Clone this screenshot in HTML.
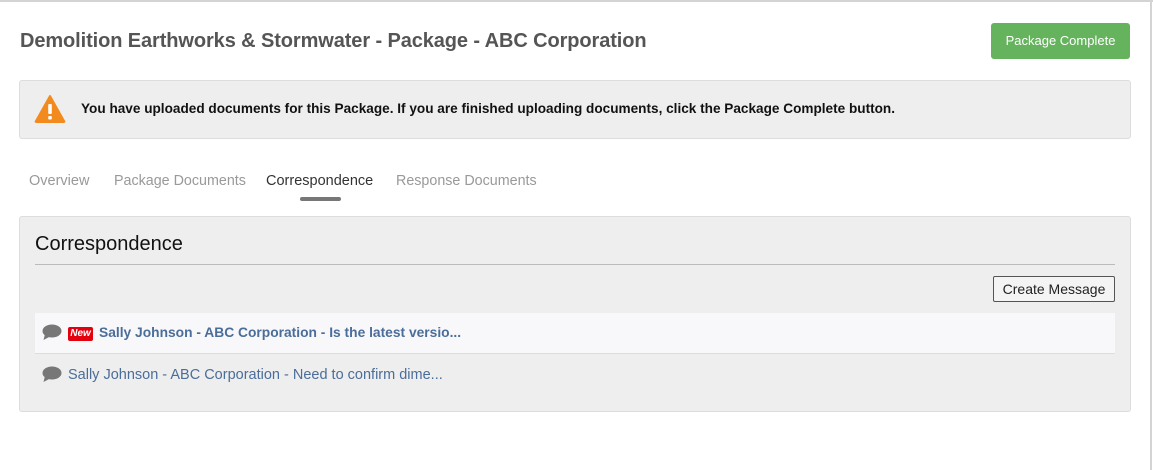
<!DOCTYPE html>
<html><head><style>
body{margin:0;width:1153px;height:470px;background:#fff;font-family:"Liberation Sans",sans-serif;position:relative;overflow:hidden}
.a{position:absolute}
</style></head><body>
<div class="a" style="left:0;top:0;width:1153px;height:2px;background:#d4d4d4"></div>
<div class="a" style="left:1150px;top:0;width:2px;height:470px;background:#d4d4d4"></div>
<div class="a" style="left:20px;top:30px;font-size:20px;font-weight:bold;color:#555;white-space:nowrap;letter-spacing:-0.1px">Demolition Earthworks &amp; Stormwater - Package - ABC Corporation</div>
<div class="a" style="left:991px;top:23px;width:139px;height:36px;background:#66b35e;border-radius:3px;color:#fff;font-size:13px;line-height:36px;text-align:center">Package Complete</div>
<div class="a" style="left:19px;top:80px;width:1110px;height:57px;background:#eee;border:1px solid #ddd;border-radius:3px"></div>
<svg class="a" style="left:34px;top:94px" width="32" height="30" viewBox="0 0 32 30"><path d="M16 2 L30 27 Q31 28 29 28 L3 28 Q1 28 2 27 Z" fill="#f38a1e" stroke="#f38a1e" stroke-linejoin="round" stroke-width="2"/><rect x="14.2" y="10" width="3.6" height="10" rx="1" fill="#fff"/><rect x="14.2" y="22" width="3.6" height="3.5" rx="1" fill="#fff"/></svg>
<div class="a" style="left:81px;top:101px;font-size:13.6px;font-weight:bold;color:#111;white-space:nowrap">You have uploaded documents for this Package. If you are finished uploading documents, click the Package Complete button.</div>
<div class="a" style="left:29px;top:173px;font-size:14.5px;color:#999;white-space:nowrap">Overview</div>
<div class="a" style="left:114px;top:173px;font-size:14.3px;color:#999;white-space:nowrap">Package Documents</div>
<div class="a" style="left:266px;top:173px;font-size:14.5px;color:#333;white-space:nowrap">Correspondence</div>
<div class="a" style="left:396px;top:173px;font-size:14.3px;color:#999;white-space:nowrap">Response Documents</div>
<div class="a" style="left:300px;top:197px;width:41px;height:4px;background:#777;border-radius:2px"></div>
<div class="a" style="left:19px;top:216px;width:1110px;height:194px;background:#eee;border:1px solid #ddd;border-radius:3px"></div>
<div class="a" style="left:35px;top:233px;font-size:20px;color:#111;white-space:nowrap">Correspondence</div>
<div class="a" style="left:35px;top:264px;width:1080px;height:1px;background:#bbb"></div>
<div class="a" style="left:993px;top:276px;width:120px;height:24px;border:1px solid #555;border-radius:2px;background:#f4f4f4;font-size:14px;line-height:24px;text-align:center;color:#222">Create Message</div>
<div class="a" style="left:35px;top:313px;width:1080px;height:40px;background:#f8f8fa;border-bottom:1px solid #ddd"></div>
<svg class="a" style="left:42px;top:324px" width="20" height="17" viewBox="0 0 20 17"><ellipse cx="10" cy="7" rx="9.5" ry="6.5" fill="#777"/><path d="M3 10 L1.5 16 L9 12Z" fill="#777"/></svg>
<div class="a" style="left:68px;top:327px;width:25px;height:14px;background:#e3000f;border-radius:2px;color:#fff;font-size:10px;font-style:italic;font-weight:bold;line-height:14px;text-align:center">New</div>
<div class="a" style="left:99px;top:325px;font-size:13.8px;font-weight:bold;color:#4a6d9a;white-space:nowrap">Sally Johnson - ABC Corporation - Is the latest versio...</div>
<svg class="a" style="left:42px;top:366px" width="20" height="17" viewBox="0 0 20 17"><ellipse cx="10" cy="7" rx="9.5" ry="6.5" fill="#777"/><path d="M3 10 L1.5 16 L9 12Z" fill="#777"/></svg>
<div class="a" style="left:68px;top:367px;font-size:14.5px;color:#4a6d9a;white-space:nowrap">Sally Johnson - ABC Corporation - Need to confirm dime...</div>
</body></html>
